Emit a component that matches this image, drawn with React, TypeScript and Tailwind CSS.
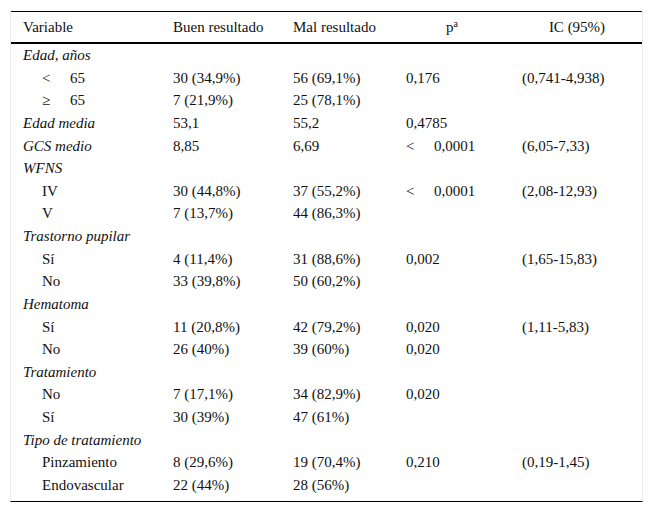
const rows: { label: string; kind: 'group' | 'item' | 'lt' | 'ge'; buen?: string; mal?: string; p?: string; pLt?: boolean; ic?: string }[] = [
  { label: 'Edad, años', kind: 'group' },
  { label: '65', kind: 'lt', buen: '30 (34,9%)', mal: '56 (69,1%)', p: '0,176', ic: '(0,741-4,938)' },
  { label: '65', kind: 'ge', buen: '7 (21,9%)', mal: '25 (78,1%)' },
  { label: 'Edad media', kind: 'group', buen: '53,1', mal: '55,2', p: '0,4785' },
  { label: 'GCS medio', kind: 'group', buen: '8,85', mal: '6,69', p: '0,0001', pLt: true, ic: '(6,05-7,33)' },
  { label: 'WFNS', kind: 'group' },
  { label: 'IV', kind: 'item', buen: '30 (44,8%)', mal: '37 (55,2%)', p: '0,0001', pLt: true, ic: '(2,08-12,93)' },
  { label: 'V', kind: 'item', buen: '7 (13,7%)', mal: '44 (86,3%)' },
  { label: 'Trastorno pupilar', kind: 'group' },
  { label: 'Sí', kind: 'item', buen: '4 (11,4%)', mal: '31 (88,6%)', p: '0,002', ic: '(1,65-15,83)' },
  { label: 'No', kind: 'item', buen: '33 (39,8%)', mal: '50 (60,2%)' },
  { label: 'Hematoma', kind: 'group' },
  { label: 'Sí', kind: 'item', buen: '11 (20,8%)', mal: '42 (79,2%)', p: '0,020', ic: '(1,11-5,83)' },
  { label: 'No', kind: 'item', buen: '26 (40%)', mal: '39 (60%)', p: '0,020' },
  { label: 'Tratamiento', kind: 'group' },
  { label: 'No', kind: 'item', buen: '7 (17,1%)', mal: '34 (82,9%)', p: '0,020' },
  { label: 'Sí', kind: 'item', buen: '30 (39%)', mal: '47 (61%)' },
  { label: 'Tipo de tratamiento', kind: 'group' },
  { label: 'Pinzamiento', kind: 'item', buen: '8 (29,6%)', mal: '19 (70,4%)', p: '0,210', ic: '(0,19-1,45)' },
  { label: 'Endovascular', kind: 'item', buen: '22 (44%)', mal: '28 (56%)' },
];

const cols = 'grid grid-cols-[150px_120px_113px_116px_134px]';

export default function App() {
  return (
    <div
      className="w-[654px] h-[513px] bg-white pt-[11px] px-[10px] text-[15px] text-[#111]"
      style={{ fontFamily: '"Liberation Serif", "Times New Roman", serif' }}
    >
      <div className="w-[633px] border-x border-[#ececec] border-b border-b-black pb-[4px]">
        {/* Header */}
        <div className={`${cols} h-[33px] items-center border-t border-black border-b-2 border-b-black`}>
          <div className="pl-[12px]">Variable</div>
          <div className="pl-[12px]">Buen resultado</div>
          <div className="pl-[12px]">Mal resultado</div>
          <div className="text-center">
            p<span className="relative -top-[5px] text-[10px] leading-none">a</span>
          </div>
          <div className="text-center">IC (95%)</div>
        </div>

        {/* Body */}
        {rows.map((r, i) => (
          <div key={i} className={`${cols} h-[22.63px] items-center`}>
            <div className={r.kind === 'group' ? 'pl-[12px] italic' : 'pl-[31px]'}>
              {r.kind === 'lt' && <span className="inline-block w-[28px]">&lt;</span>}
              {r.kind === 'ge' && <span className="inline-block w-[28px]">≥</span>}
              {r.label}
            </div>
            <div className="pl-[12px]">{r.buen}</div>
            <div className="pl-[12px]">{r.mal}</div>
            <div className="pl-[12px]">
              {r.pLt && <span className="inline-block w-[28px]">&lt;</span>}
              {r.p}
            </div>
            <div className="pl-[12px]">{r.ic}</div>
          </div>
        ))}
      </div>
    </div>
  );
}
